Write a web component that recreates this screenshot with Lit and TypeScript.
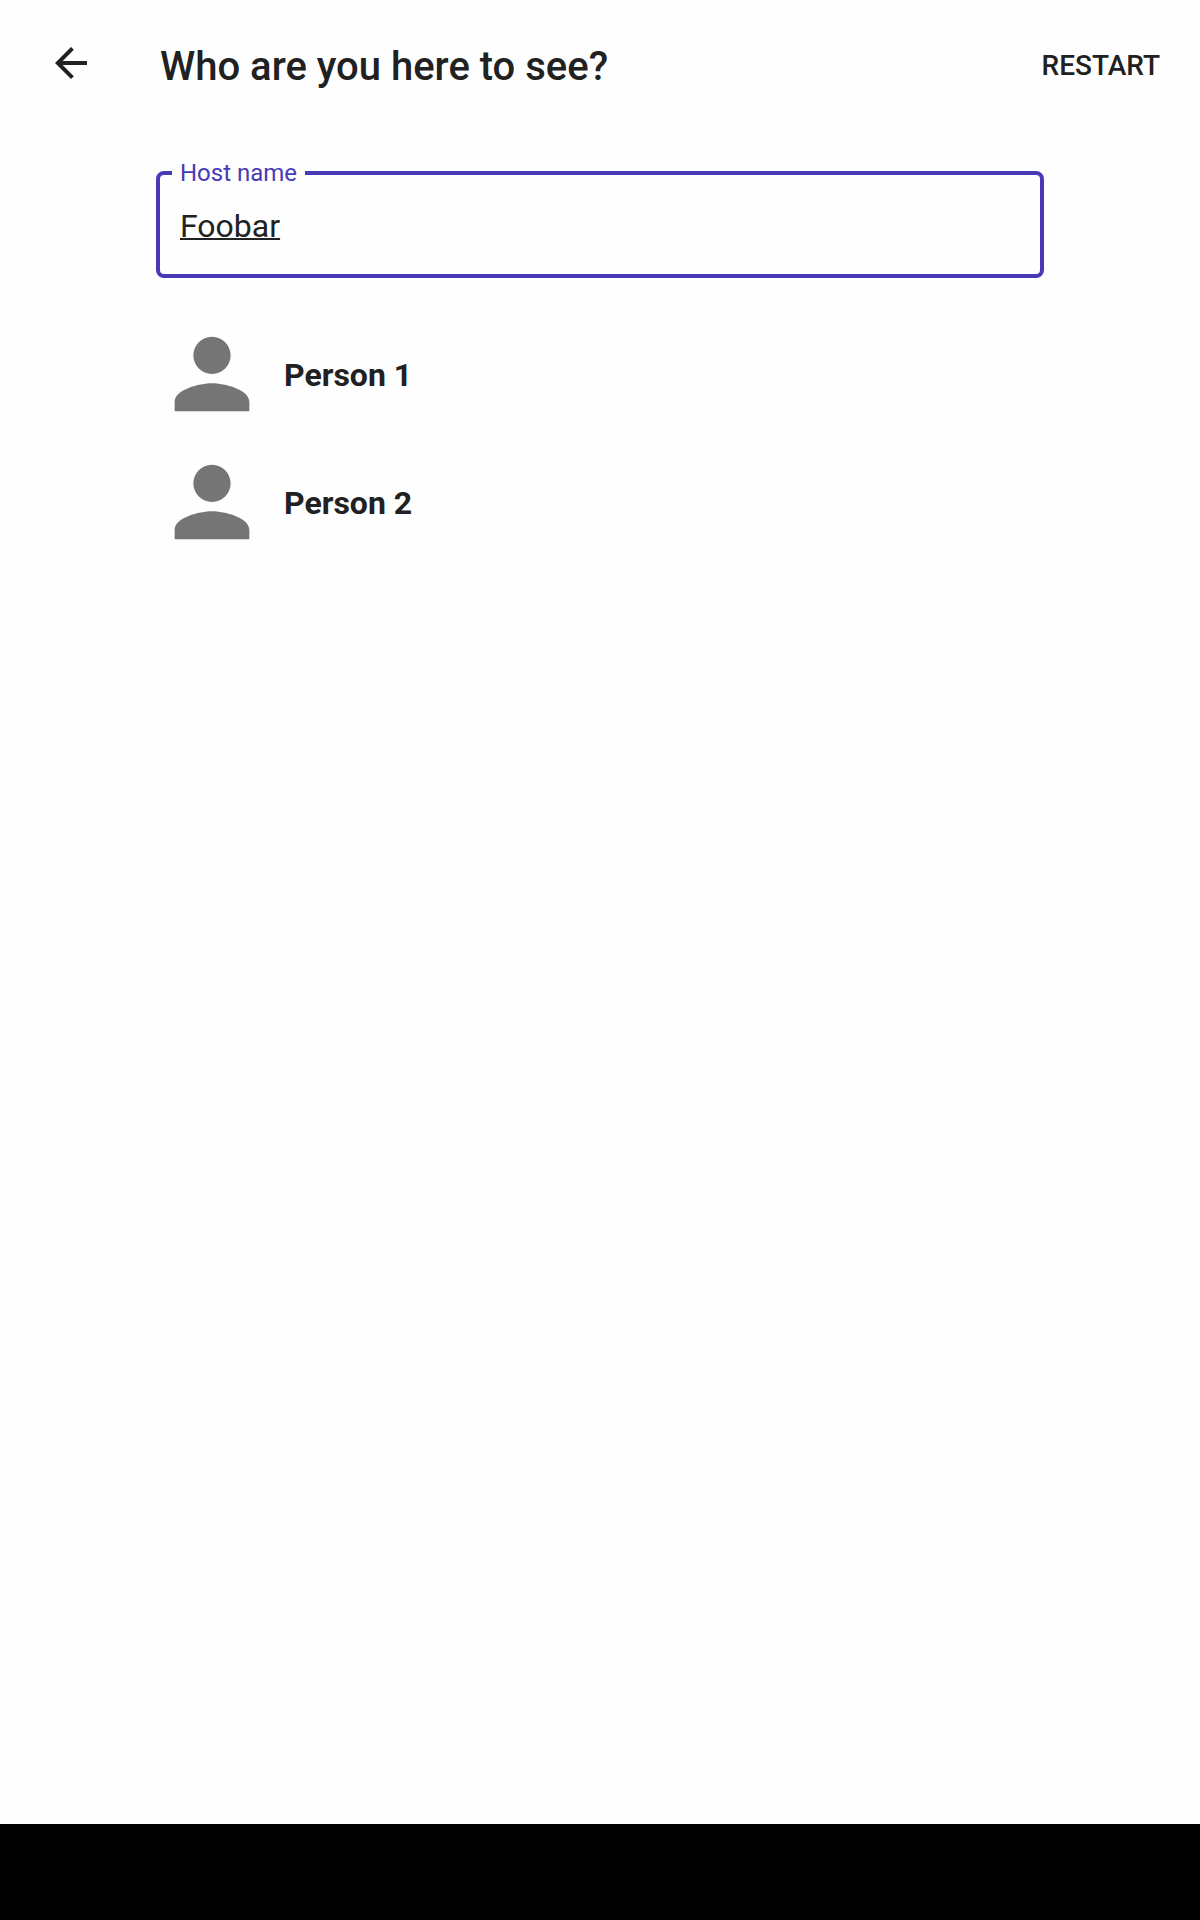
import { LitElement, html, css } from "lit";
import { customElement, state } from "lit/decorators.js";

@customElement("app-root")
export class AppRoot extends LitElement {
  static styles = css`
    :host {
      display: flex;
      flex-direction: column;
      min-height: 100vh;
      background: #fefefe;
      color: #212121;
      font-family: Roboto, sans-serif;
    }
    * {
      box-sizing: border-box;
    }
    button {
      border: 0;
      background: none;
      color: inherit;
      font: inherit;
      cursor: pointer;
    }
    .bar {
      display: flex;
      align-items: center;
      min-height: 130px;
      padding-right: 40px;
    }
    .back {
      display: flex;
      width: 160px;
      padding: 0 0 4px 47px;
    }
    .back-icon {
      width: 48px;
      height: 48px;
      fill: currentColor;
    }
    .title {
      flex: 1;
      margin: 0;
      padding-top: 4px;
      font-size: 40px;
      line-height: 48px;
      font-weight: 500;
    }
    .restart {
      padding: 2px 0 0;
      font-size: 28px;
      line-height: 32px;
      font-weight: 500;
      text-transform: uppercase;
    }
    .content {
      flex: 1;
      padding: 28px 156px 0;
    }
    .field {
      margin: 0;
      min-width: 0;
      padding: 0 12px;
      border: 4px solid #483ab6;
      border-radius: 8px;
    }
    .legend {
      padding: 0 8px;
      color: #483ab6;
      font-size: 24px;
      line-height: 30px;
    }
    .input {
      display: block;
      width: 100%;
      height: 40px;
      margin: 18px 0 28px;
      padding: 0 8px;
      border: 0;
      outline: 0;
      background: none;
      color: inherit;
      font: 32px/40px Roboto, sans-serif;
      text-decoration: underline 2px;
    }
    .people {
      list-style: none;
      margin: 32px 0 0;
      padding: 0;
    }
    .person {
      display: flex;
      align-items: center;
      gap: 16px;
      width: 100%;
      padding: 8px 0;
      text-align: left;
      font-size: 32px;
      line-height: 40px;
      font-weight: 700;
    }
    .name {
      padding-top: 2px;
    }
    .avatar {
      flex: none;
      width: 112px;
      height: 112px;
      fill: #757575;
    }
    .system-bar {
      height: 96px;
      background: #000;
    }
  `;

  @state() private query = "Foobar";
  private people = ["Person 1", "Person 2"];

  render() {
    return html`
      <header class="bar">
        <button class="back" aria-label="Back">
          <svg class="back-icon" viewBox="0 0 24 24" aria-hidden="true">
            <path d="M20 11H7.83l5.59-5.59L12 4l-8 8 8 8 1.41-1.41L7.83 13H20v-2z" />
          </svg>
        </button>
        <h1 class="title">Who are you here to see?</h1>
        <button class="restart">Restart</button>
      </header>
      <main class="content">
        <fieldset class="field">
          <legend class="legend"><label for="host-name">Host name</label></legend>
          <input
            class="input"
            id="host-name"
            type="text"
            spellcheck="false"
            autocomplete="off"
            .value=${this.query}
            @input=${(e: Event) => (this.query = (e.target as HTMLInputElement).value)}
          />
        </fieldset>
        <ul class="people">
          ${this.people.map(
            (name) => html`
              <li>
                <button class="person">
                  <svg class="avatar" viewBox="0 0 24 24" aria-hidden="true">
                    <path
                      d="M12 12c2.21 0 4-1.79 4-4s-1.79-4-4-4-4 1.79-4 4 1.79 4 4 4zm0 2c-2.67 0-8 1.34-8 4v2h16v-2c0-2.66-5.33-4-8-4z"
                    />
                  </svg>
                  <span class="name">${name}</span>
                </button>
              </li>
            `
          )}
        </ul>
      </main>
      <footer class="system-bar"></footer>
    `;
  }
}
